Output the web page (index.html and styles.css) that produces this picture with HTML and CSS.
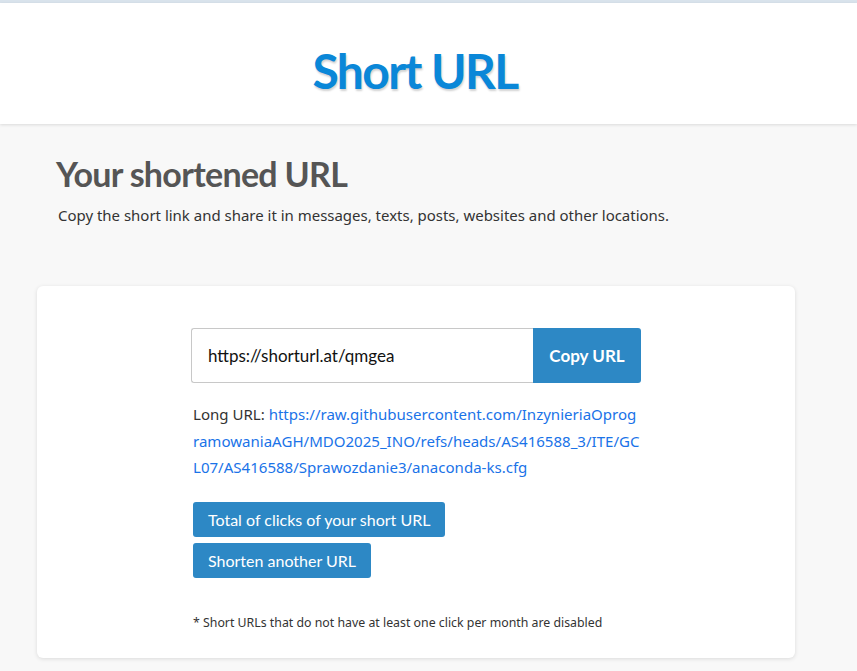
FILE: index.html
```html
<!DOCTYPE html>
<html>
<head>
<meta charset="utf-8">
<link rel="stylesheet" href="styles.css">
</head>
<body>
<div class="topbar"></div>
<header class="header">
  <h1 class="brand">Short URL</h1>
</header>
<main class="main">
  <section class="intro">
    <h2 class="intro-title">Your shortened URL</h2>
    <p class="intro-text">Copy the short link and share it in messages, texts, posts, websites and other locations.</p>
  </section>
  <section class="card">
    <div class="column">
      <div class="copy-row">
        <input class="url-input" type="text" value="https://shorturl.at/qmgea">
        <button class="btn copy-btn">Copy URL</button>
      </div>
      <p class="long-url">Long URL: <a class="link" href="#">https://raw.githubusercontent.com/InzynieriaOprog<br>ramowaniaAGH/MDO2025_INO/refs/heads/AS416588_3/ITE/GC<br>L07/AS416588/Sprawozdanie3/anaconda-ks.cfg</a></p>
      <div class="actions">
        <button class="btn action-btn">Total of clicks of your short URL</button>
        <button class="btn action-btn">Shorten another URL</button>
      </div>
      <p class="note">* Short URLs that do not have at least one click per month are disabled</p>
    </div>
  </section>
</main>
</body>
</html>
```
FILE: styles.css
```css
html, body {
  margin: 0;
  padding: 0;
}
body {
  background: #f8f8f8;
  font-family: "Noto Sans", "Open Sans", sans-serif;
  color: #333;
  height: 671px;
  overflow: hidden;
}
.topbar {
  height: 3px;
  background: #d9e3ec;
}
.header {
  background: #fff;
  height: 121px;
  box-sizing: border-box;
  padding-right: 27px;
  display: flex;
  align-items: center;
  justify-content: center;
  box-shadow: 0 1px 3px rgba(0,0,0,0.12);
  position: relative;
}
.brand {
  margin: 0;
  font-family: "Lato", sans-serif;
  font-size: 48px;
  font-weight: 700;
  color: #0a87d8;
  letter-spacing: -1.6px;
  text-shadow: 1px 2px 2px rgba(0,0,0,0.18);
  transform: translateY(7px);
}
.main {
  padding: 28px 0 0 0;
}
.intro {
  padding-left: 56px;
}
.intro-title {
  margin: 0;
  font-family: "Lato", sans-serif;
  font-size: 34px;
  font-weight: 700;
  color: #555;
  letter-spacing: -0.7px;
  line-height: 44px;
}
.intro-text {
  margin: 8px 0 0 2px;
  font-size: 14.98px;
  color: #333;
  line-height: 22px;
}
.card {
  margin: 60px 0 0 37px;
  width: 758px;
  height: 372px;
  background: #fff;
  border-radius: 6px;
  box-shadow: 0 1px 4px rgba(0,0,0,0.12);
  display: flex;
  justify-content: center;
}
.column {
  width: 450px;
  padding-top: 42px;
}
.copy-row {
  display: flex;
  height: 55px;
}
.url-input {
  flex: 1;
  box-sizing: border-box;
  height: 55px;
  border: 1px solid #c8c8c8;
  border-right: none;
  border-radius: 3px 0 0 3px;
  padding: 0 16px;
  font-family: "Lato", sans-serif;
  font-size: 17px;
  color: #111;
  outline: none;
}
.btn {
  background: #2d88c5;
  color: #fff;
  border: none;
  font-family: "Lato", sans-serif;
  cursor: pointer;
}
.copy-btn {
  width: 108px;
  height: 55px;
  font-size: 17px;
  font-weight: 700;
  border-radius: 0 3px 3px 0;
  padding: 0;
}
.long-url {
  margin: 18px 0 0 2px;
  font-size: 15.05px;
  line-height: 26.5px;
  color: #333;
  width: 460px;
}
.link {
  color: #1a73e8;
  text-decoration: none;
}
.actions {
  margin-top: 21px;
  display: flex;
  flex-direction: column;
  align-items: flex-start;
  gap: 6px;
  padding-left: 2px;
}
.action-btn {
  height: 35px;
  padding: 0 15px;
  font-size: 16px;
  border-radius: 3px;
}
.note {
  margin: 36px 0 0 2px;
  font-size: 12.33px;
  color: #333;
}
```
